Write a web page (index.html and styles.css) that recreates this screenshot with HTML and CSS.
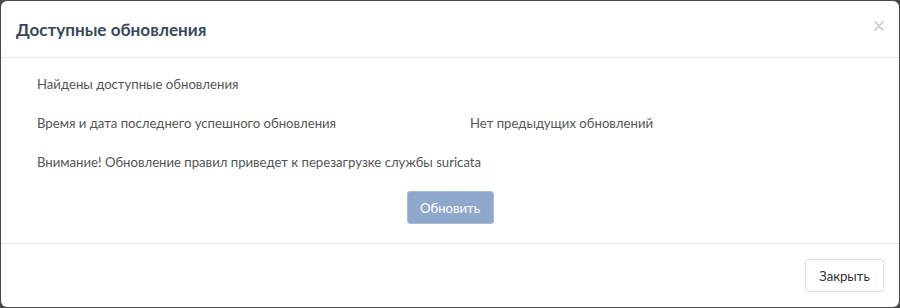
FILE: index.html
```html
<!DOCTYPE html>
<html lang="ru">
<head>
<meta charset="utf-8">
<title>Доступные обновления</title>
<link rel="stylesheet" href="styles.css">
</head>
<body>
<div class="modal">
  <div class="modal-header">
    <h4 class="modal-title">Доступные обновления</h4>
    <button class="close" type="button" aria-label="Закрыть">
      <svg width="10" height="10" viewBox="0 0 10 10"><path d="M1 1L9 9M9 1L1 9" stroke="#c4c4c4" stroke-width="1.6" stroke-linecap="round"/></svg>
    </button>
  </div>
  <div class="modal-body">
    <div class="row">Найдены доступные обновления</div>
    <div class="row two">
      <span>Время и дата последнего успешного обновления</span>
      <span>Нет предыдущих обновлений</span>
    </div>
    <div class="row">Внимание! Обновление правил приведет к перезагрузке службы suricata</div>
    <div class="actions">
      <button class="btn btn-primary" type="button" disabled>Обновить</button>
    </div>
  </div>
  <div class="modal-footer">
    <button class="btn btn-default" type="button">Закрыть</button>
  </div>
</div>
</body>
</html>
```
FILE: styles.css
```css
html, body {
  margin: 0;
  padding: 0;
}
body {
  background: #474849;
  font-family: "Lato", "Noto Sans", sans-serif;
  font-size: 13.15px;
  color: #555;
  padding: 1px;
  box-sizing: border-box;
  height: 308px;
}
.modal {
  background: #fff;
  border-radius: 6px;
  height: 306px;
  display: flex;
  flex-direction: column;
}
.modal-header {
  height: 56px;
  padding: 0 15px;
  border-bottom: 1px solid #e5e5e5;
  display: flex;
  align-items: center;
  justify-content: space-between;
}
.modal-title {
  margin: 0;
  font-size: 17.1px;
  font-weight: 700;
  color: #3b4859;
}
.close {
  background: none;
  border: 0;
  padding: 0;
  margin-right: -2px;
  margin-top: -6px;
  width: 14px;
  height: 14px;
  display: flex;
  align-items: center;
  justify-content: center;
}
.modal-body {
  padding: 16px 36px 16px 36px;
  flex: 1;
}
.row {
  height: 20px;
  line-height: 20px;
  margin-bottom: 19px;
}
.row.two {
  display: grid;
  grid-template-columns: 433px 1fr;
}
.actions {
  display: flex;
  justify-content: center;
}
.btn {
  font-family: inherit;
  font-size: 13.15px;
  height: 33px;
  padding: 0 12px;
  border-radius: 3px;
  box-sizing: border-box;
}
.btn-primary {
  background: #8fa7cb;
  border: 1px solid #a9bad6;
  color: #fff;
  width: 87px;
}
.modal-footer {
  border-top: 1px solid #e5e5e5;
  padding: 15px 15px;
  display: flex;
  justify-content: flex-end;
}
.btn-default {
  background: #fff;
  border: 1px solid #ddd;
  color: #333;
  width: 79px;
}
```
